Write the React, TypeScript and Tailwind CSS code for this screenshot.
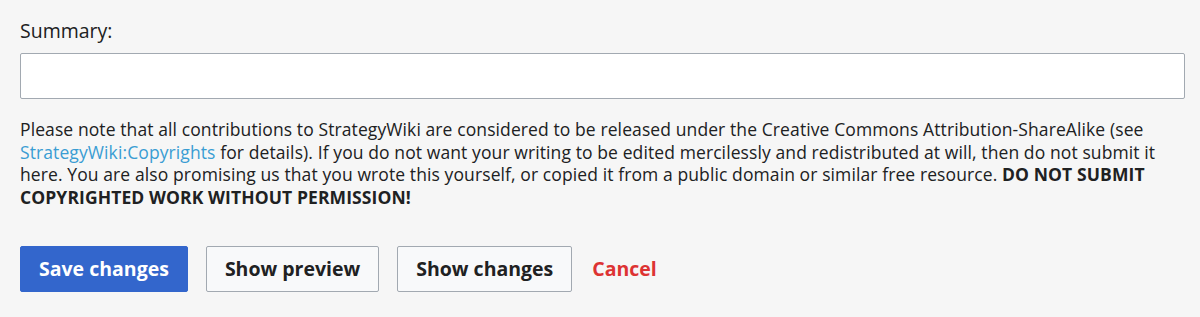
export default function App() {
  return (
    <div className="min-h-[317px] bg-[#f6f6f6] pl-[20px] pr-[15px] pt-[17px] font-['Open_Sans',sans-serif] text-[#202122]">
      <label className="block text-[19.5px] leading-[27px]">Summary:</label>
      <input
        type="text"
        className="mt-[9px] block h-[46px] w-full rounded-[2px] border border-[#a2a9b1] bg-white px-2 outline-none"
      />
      <p className="mt-[19px] text-[17.5px] leading-[22.7px] tracking-[0.1px]">
        Please note that all contributions to StrategyWiki are considered to be
        released under the Creative Commons Attribution-ShareAlike (see{" "}
        <a className="text-[#3a9dd3]">StrategyWiki:Copyrights</a> for details).
        If you do not want your writing to be edited mercilessly and
        redistributed at will, then do not submit it here. You are also
        promising us that you wrote this yourself, or copied it from a public
        domain or similar free resource.{" "}
        <b className="font-bold">DO NOT SUBMIT COPYRIGHTED WORK WITHOUT PERMISSION!</b>
      </p>
      <div className="mt-[37px] flex items-center gap-[18px]">
        <button className="h-[46px] rounded-[2px] border border-[#3366cc] bg-[#3366cc] px-[18px] text-[19.5px] font-bold text-white">
          Save changes
        </button>
        <button className="h-[46px] rounded-[2px] border border-[#a2a9b1] bg-[#f8f9fa] px-[18px] text-[19.5px] font-bold text-[#202122]">
          Show preview
        </button>
        <button className="h-[46px] rounded-[2px] border border-[#a2a9b1] bg-[#f8f9fa] px-[18px] text-[19.5px] font-bold text-[#202122]">
          Show changes
        </button>
        <a className="ml-[2px] text-[19.5px] font-bold text-[#d33]">Cancel</a>
      </div>
    </div>
  );
}
